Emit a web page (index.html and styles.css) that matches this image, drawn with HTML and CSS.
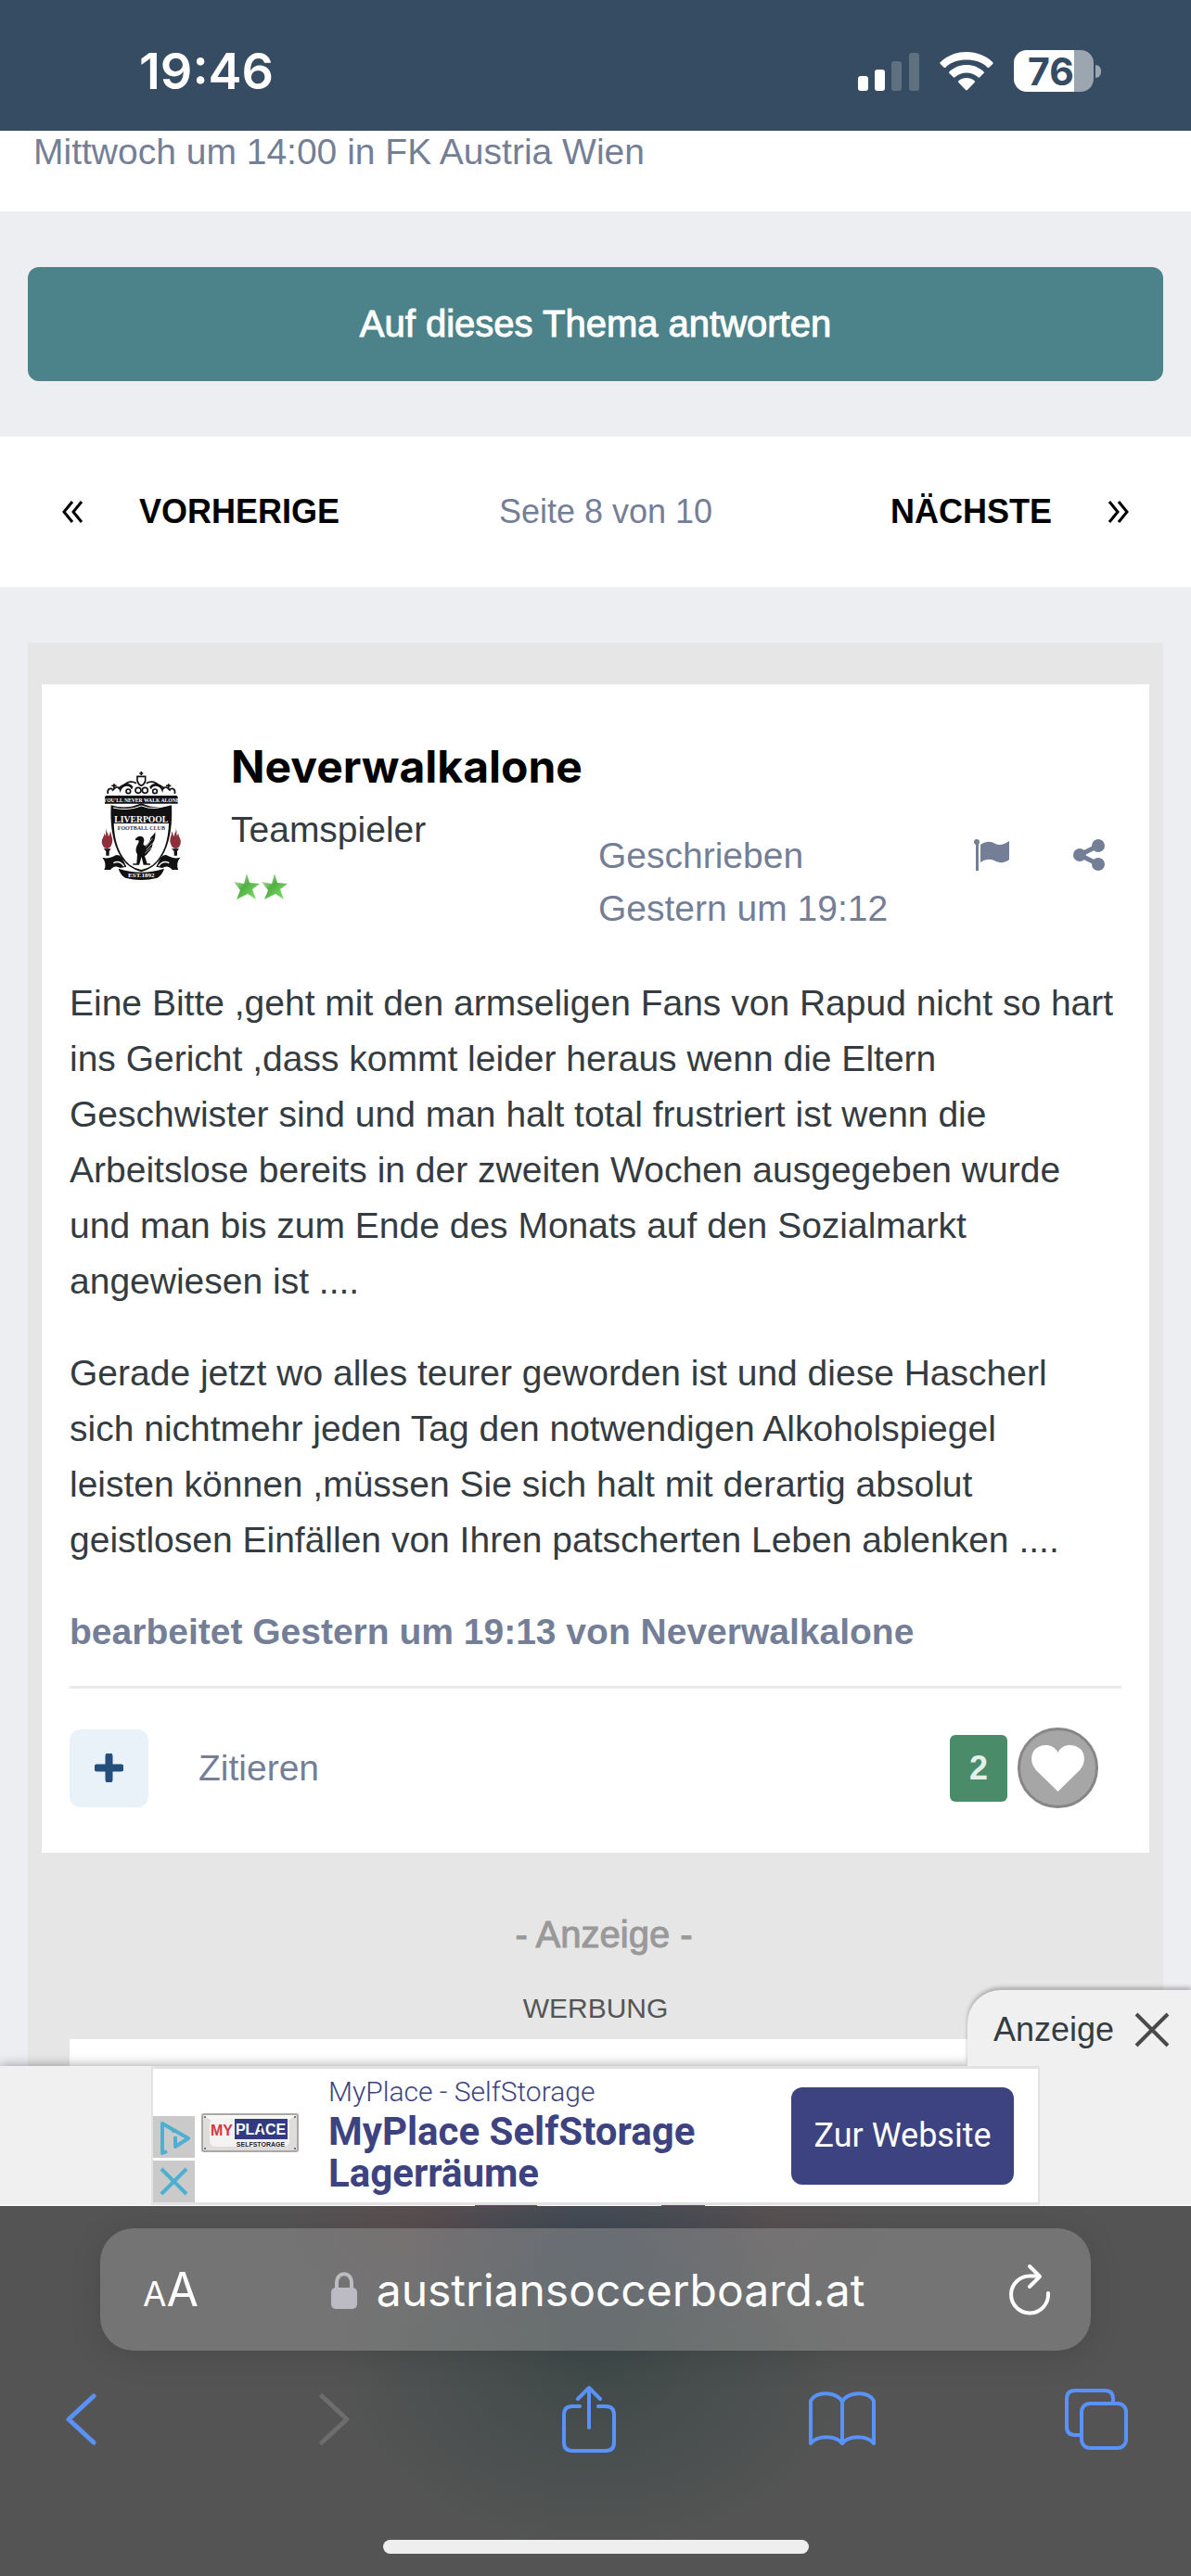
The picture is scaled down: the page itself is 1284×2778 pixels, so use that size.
FILE: index.html
```html
<!DOCTYPE html>
<html lang="de">

<head>
    <meta charset="UTF-8">
    <meta name="viewport" content="width=device-width, initial-scale=1.0">
    <title>Austrian Soccer Board</title>
    <link rel="stylesheet" href="styles.css">
</head>

<body>
    <header class="status">
        <time class="status-time">19:46</time>
        <div class="status-icons">
            <svg class="signal" width="66" height="44" viewBox="0 0 66 44">
                <rect x="0" y="27" width="11" height="16" rx="3" fill="#fff"/>
                <rect x="18" y="20" width="11" height="23" rx="3" fill="#fff"/>
                <rect x="36" y="11" width="11" height="32" rx="3" fill="#5f7081"/>
                <rect x="55" y="2" width="11" height="41" rx="3" fill="#5f7081"/>
            </svg>
            <svg class="wifi" width="58" height="44" viewBox="0 0 58 44">
                <path d="M29 1C18 1 8 5 .8 12c-.6.6-.6 1.300 0 1.900l3.800 3.800c.5.500 1.300.5 1.800 0C12.500 11.800 20.500 9.600 29 9.600s16.500 2.200 22.600 8.100c.5.500 1.300.5 1.800 0l3.800-3.800c.6-.6.6-1.300 0-1.900C50 5 40 1 29 1z" fill="#fff"/>
                <path d="M29 15c-7 0-13.500 2.600-18.500 7.200-.6.5-.6 1.300 0 1.900l4.300 4.200c.5.5 1.200.5 1.700 0 3.500-3.100 7.800-4.800 12.500-4.800s9 1.700 12.500 4.800c.5.5 1.200.5 1.700 0l4.300-4.200c.6-.6.6-1.400 0-1.900C42.500 17.600 36 15 29 15z" fill="#fff"/>
                <path d="M29 29c-3.200 0-6.200 1.100-8.500 3.100-.6.500-.6 1.300-.1 1.800l7.700 8.100c.5.600 1.300.6 1.800 0l7.700-8.100c.5-.5.5-1.300-.1-1.800C35.200 30.100 32.200 29 29 29z" fill="#fff"/>
            </svg>
            <div class="battery">
                <span class="battery-level">76</span>
                <span class="battery-cap"></span>
            </div>
        </div>
    </header>

    <main class="content">
        <div class="topic-info">Mittwoch um 14:00 in FK Austria Wien</div>

        <button type="button" class="reply">Auf dieses Thema antworten</button>

        <nav class="pager">
            <a href="#" class="pager-link">
                <svg width="23" height="24" viewBox="0 0 23 24"><path d="M11 1L2 12l9 11M21 1l-9 11 9 11" fill="none" stroke="#000" stroke-width="3"/></svg>
                VORHERIGE
            </a>
            <span class="pager-count">Seite 8 von 10</span>
            <a href="#" class="pager-link">
                NÄCHSTE
                <svg width="23" height="24" viewBox="0 0 23 24"><path d="M12 1l9 11-9 11M2 1l9 11-9 11" fill="none" stroke="#000" stroke-width="3"/></svg>
            </a>
        </nav>

        <div class="feed">
            <article class="post">
                <div class="post-head">
                    <svg class="avatar" width="120" height="120" viewBox="40 90 360 360">
                        <g fill="none" stroke="#111" stroke-width="5">
                            <path d="M205 112h26v14q-3 12-13 16-10-4-13-16zM218 96v12M212 102h12"/>
                            <path d="M110 168c-4-16 10-22 16-12 10-14 22-10 24 0 8-20 32-20 38-4M326 168c4-16-10-22-16-12-10-14-22-10-24 0-8-20-32-20-38-4"/>
                            <path d="M144 152c10-14 34-22 46-4M292 152c-10-14-34-22-46-4M130 136v18M306 136v18M122 142h16M298 142h16"/>
                            <path d="M156 146q22-26 46-12M280 146q-22-26-46-12"/>
                            <circle cx="208" cy="157" r="9"/>
                            <circle cx="230" cy="157" r="9"/>
                            <circle cx="176" cy="160" r="7"/>
                            <circle cx="262" cy="160" r="7"/>
                        </g>
                        <path d="M104 174h228l4 4v22H100v-22z" fill="#111"/>
                        <text class="crest-text" x="218" y="194" font-size="17" fill="#fff">YOU'LL NEVER WALK ALONE</text>
                        <path d="M120 205q50 16 98-6 48 22 98 6c4 80-10 160-60 198q-20 14-38 18-18-4-38-18c-50-38-64-118-60-198z" fill="#111"/>
                        <path d="M129 264q89-6 178 0c-2 56-16 104-52 134q-18 13-37 16-19-3-37-16c-36-30-50-78-52-134z" fill="#fff"/>
                        <path d="M127 213q46 12 91-6 45 18 91-6" fill="none" stroke="#fff" stroke-width="3"/>
                        <path d="M130 236h176v28H130z" fill="#111"/>
                        <text class="crest-text" x="218" y="260" font-size="29" fill="#fff">LIVERPOOL</text>
                        <text class="crest-text" x="218" y="284" font-size="18" fill="#333">FOOTBALL CLUB</text>
                        <path d="M198 316q8-14 22-10 10 6 6 18-4 10 4 12 16-8 18-26 10-8 15-18 2 22-8 36-2 20-14 30-6 8-12 12l8 24h10v4h-22l-6-26-8 26h-20v-4h12l2-30q-10-14 2-34 6-10 0-12-6 2-9-2z" fill="#111"/>
                        <path d="M232 340l22-28M234 350l20-22M230 360l20-18" stroke="#fff" stroke-width="2"/>
                        <path d="M108 278c-8 14 8 18 2 28 8-4 4-12 10-16-2 14 10 22 2 42-6 18-26 16-30 0-6-18 6-22 6-36 4 4 4 8 4 10 4-10-2-18 6-28z" fill="#8f2f3b"/>
                        <path d="M328 278c8 14-8 18-2 28-8-4-4-12-10-16 2 14-10 22-2 42 6 18 26 16 30 0 6-18-6-22-6-36-4 4-4 8-4 10-4-10 2-18-6-28z" fill="#8f2f3b"/>
                        <path d="M96 346h24l-6 8v14h-10v-14zM316 346h24l-6 8v14h-10v-14z" fill="#111"/>
                        <path d="M92 374q20 6 38-4 14-10 26 6l14 28-20 4q-18-12-32 6l-20 0q10-20-6-40zM344 374q-20 6-38-4-14-10-26 6l-14 28 20 4q18-12 32 6l20 0q-10-20 6-40z" fill="#111"/>
                        <path d="M128 392q20-10 34 10M308 392q-20-10-34 10" fill="none" stroke="#fff" stroke-width="4"/>
                        <path d="M144 410q74 24 148 0-6 20-22 30-52 14-104 0-16-10-22-30z" fill="#111"/>
                        <text class="crest-text" x="218" y="438" font-size="21" fill="#fff">EST.1892</text>
                    </svg>
                    <div class="author">
                        <h3 class="author-name">Neverwalkalone</h3>
                        <div class="author-rank">Teamspieler</div>
                        <svg class="stars" width="58" height="28" viewBox="0 0 58 28">
                            <defs>
                                <linearGradient id="starFill" x1="0" y1="0" x2="1" y2="1">
                                    <stop offset="0" stop-color="#dcfad4"/>
                                    <stop offset=".45" stop-color="#4fb040"/>
                                    <stop offset="1" stop-color="#8be87b"/>
                                </linearGradient>
                            </defs>
                            <path d="M14 0l3 10 11 1-8 6 4 11-9-6-12 6 4-10L0 9l11 2z" fill="url(#starFill)"/>
                            <path d="M44 0l3 10 11 1-8 6 4 11-9-6-12 6 4-10L30 9l11 2z" fill="url(#starFill)"/>
                        </svg>
                    </div>
                    <a href="#" class="post-date">Geschrieben<br>Gestern um 19:12</a>
                    <div class="post-tools">
                        <button type="button" class="icon-btn" aria-label="Melden">
                            <svg width="39" height="34" viewBox="0 0 39 34"><circle cx="3" cy="3" r="3" fill="#747f97"/><path d="M2 3h3v31H2zM7 6c6-4 11-4 16-1 5 2 9 1 15-3v20c-5 4-11 4-16 1-5-2-9-2-15 2z" fill="#747f97"/></svg>
                        </button>
                        <button type="button" class="icon-btn" aria-label="Teilen">
                            <svg width="34" height="34" viewBox="0 0 34 34"><path d="M27 7L7 17l20 10" fill="none" stroke="#747f97" stroke-width="5"/><circle cx="27" cy="7" r="7" fill="#747f97"/><circle cx="7" cy="17" r="7" fill="#747f97"/><circle cx="27" cy="27" r="7" fill="#747f97"/></svg>
                        </button>
                    </div>
                </div>

                <div class="post-body">
                    <p>Eine Bitte ,geht mit den armseligen Fans von Rapud nicht so hart ins Gericht ,dass kommt leider heraus wenn die Eltern Geschwister sind und man halt total frustriert ist wenn die Arbeitslose bereits in der zweiten Wochen ausgegeben wurde und man bis zum Ende des Monats auf den Sozialmarkt angewiesen ist ....</p>
                    <p>Gerade jetzt wo alles teurer geworden ist und diese Hascherl<br>
                        sich nichtmehr jeden Tag den notwendigen Alkoholspiegel<br>
                        leisten können ,müssen Sie sich halt mit derartig absolut<br>
                        geistlosen Einfällen von Ihren patscherten Leben ablenken ....</p>
                    <p class="edited">bearbeitet Gestern um 19:13 von Neverwalkalone</p>
                </div>

                <div class="post-actions">
                    <button type="button" class="multiquote" aria-label="Multi-Zitat">
                        <svg width="31" height="31" viewBox="0 0 31 31"><path d="M15.500 3v25M3 15.500h25" stroke="#244e7b" stroke-width="8" stroke-linecap="round"/></svg>
                    </button>
                    <a href="#" class="quote">Zitieren</a>
                    <span class="likes">2</span>
                    <button type="button" class="like" aria-label="Gefällt mir">
                        <svg width="57" height="50" viewBox="0 0 57 50"><path d="M28.500 50L5 27C-2 19-1 8 5 3.500 13-2 24-1 28.500 8 33-1 44-2 52 3.500 58 8 59 19 52 27z" fill="#fff"/></svg>
                    </button>
                </div>
            </article>

            <div class="ad-label">- Anzeige -</div>
            <div class="ad-caption">WERBUNG</div>
            <div class="ad-slot"></div>
        </div>
    </main>

    <aside class="banner">
        <div class="banner-tab">
            <span>Anzeige</span>
            <button type="button" class="icon-btn" aria-label="Schließen">
                <svg width="38" height="38" viewBox="0 0 38 38"><path d="M2 2l34 34M36 2L2 36" stroke="#4a4a4a" stroke-width="4"/></svg>
            </button>
        </div>
        <div class="banner-ad">
            <div class="adchoices">
                <svg width="45" height="45" viewBox="0 0 45 45"><path d="M15 38l-5 2V8l28 16-14 9V22" fill="none" stroke="#4fafd0" stroke-width="4" stroke-linejoin="round"/><circle cx="22" cy="16" r="2" fill="#4fafd0"/></svg>
                <svg width="45" height="45" viewBox="0 0 45 45"><path d="M9 9l27 27M36 9L9 36" stroke="#4fafd0" stroke-width="4"/></svg>
            </div>
            <svg class="myplace" width="105" height="42" viewBox="0 0 105 42">
                <rect x="1" y="1" width="103" height="40" rx="2" fill="#dedddb" stroke="#a9a8a6" stroke-width="2"/>
                <path d="M2 2h101L93 8H11z" fill="#f7f7f7"/>
                <rect x="9" y="6" width="86" height="30" rx="6" fill="#f3f3f2"/>
                <circle cx="4" cy="4" r="1" fill="#555"/>
                <circle cx="101" cy="4" r="1" fill="#555"/>
                <circle cx="4" cy="38" r="1" fill="#555"/>
                <circle cx="101" cy="38" r="1" fill="#555"/>
                <rect x="36" y="6" width="57" height="22" fill="#333a80"/>
                <text class="logo-text" x="22" y="24" font-size="16" fill="#d13a41">MY</text>
                <text class="logo-text" x="64" y="23" font-size="16" fill="#fff">PLACE</text>
                <circle cx="64" cy="15" r="1.500" fill="#111"/>
                <path d="M63.500 15h1v5h-1z" fill="#111"/>
                <text class="logo-text" x="64" y="36" font-size="7" fill="#222">SELFSTORAGE</text>
            </svg>
            <div class="banner-text">
                <div class="banner-brand">MyPlace - SelfStorage</div>
                <div class="banner-title">MyPlace SelfStorage Lagerräume</div>
            </div>
            <a href="#" class="banner-cta">Zur Website</a>
        </div>
        <div class="banner-edge"></div>
    </aside>

    <footer class="browser">
        <div class="address">
            <button type="button" class="text-size" aria-label="Textgröße"><small>A</small>A</button>
            <div class="domain">
                <svg width="28" height="40" viewBox="0 0 28 40"><rect x="0" y="17" width="28" height="23" rx="5" fill="#bcbac3"/><path d="M6 19v-7c0-13 16-13 16 0v7" fill="none" stroke="#bcbac3" stroke-width="4"/></svg>
                <span>austriansoccerboard.at</span>
            </div>
            <button type="button" class="icon-btn" aria-label="Neu laden">
                <svg width="46" height="56" viewBox="0 0 46 56"><path d="M33 13.500H24A20 20 0 1 0 43 32" fill="none" stroke="#fff" stroke-width="4" stroke-linecap="round"/><path d="M23 3l11 11-11 11" fill="none" stroke="#fff" stroke-width="4" stroke-linecap="round" stroke-linejoin="round"/></svg>
            </button>
        </div>
        <nav class="toolbar">
            <button type="button" class="icon-btn" aria-label="Zurück">
                <svg width="34" height="56" viewBox="0 0 34 56"><path d="M31 3L4 28l27 25" fill="none" stroke="#5a92fb" stroke-width="5" stroke-linecap="round" stroke-linejoin="round"/></svg>
            </button>
            <button type="button" class="icon-btn" aria-label="Vorwärts">
                <svg width="34" height="56" viewBox="0 0 34 56"><path d="M3 3l27 25L3 53" fill="none" stroke="#6d6d6d" stroke-width="5" stroke-linecap="round" stroke-linejoin="round"/></svg>
            </button>
            <button type="button" class="icon-btn" aria-label="Teilen">
                <svg width="58" height="72" viewBox="0 0 58 72"><path d="M19 22h-8q-9 0-9 9v30q0 9 9 9h36q9 0 9-9V31q0-9-9-9h-8M29 45V3M17 14L29 2l12 12" fill="none" stroke="#5a92fb" stroke-width="4" stroke-linecap="round" stroke-linejoin="round"/></svg>
            </button>
            <button type="button" class="icon-btn" aria-label="Lesezeichen">
                <svg width="72" height="60" viewBox="0 0 72 60"><path d="M36 11C30 0 8-1 2 10v46c7-9 27-9 34 0 7-9 27-9 34 0V10C64-1 42 0 36 11zM36 11v45" fill="none" stroke="#5a92fb" stroke-width="4" stroke-linejoin="round"/></svg>
            </button>
            <button type="button" class="icon-btn" aria-label="Tabs">
                <svg width="68" height="66" viewBox="0 0 68 66"><rect x="18" y="16" width="48" height="48" rx="9" fill="none" stroke="#5a92fb" stroke-width="4"/><path d="M17 50h-6q-9 0-9-9V11q0-9 9-9h32q9 0 9 9v4" fill="none" stroke="#5a92fb" stroke-width="4"/></svg>
            </button>
        </nav>
        <div class="home-bar"></div>
    </footer>
</body>

</html>
```
FILE: styles.css
```css
* {
    box-sizing: border-box;
}

body {
    display: flex;
    flex-direction: column;
    height: 100vh;
    margin: 0;
    overflow: hidden;
    background-color: #edeef2;
    color: #353c41;
    font-family: "Liberation Sans", Arial, sans-serif;
    font-size: 39px;
    line-height: 60px;
}

svg {
    display: block;
    flex: none;
}

a {
    color: inherit;
    text-decoration: none;
}

button {
    font-family: inherit;
    border: none;
    padding: 0;
    cursor: pointer;
}

.icon-btn {
    background: none;
}

/* Statusleiste */
.status {
    display: flex;
    flex: none;
    justify-content: space-between;
    align-items: center;
    height: 141px;
    padding: 12px 97px 0 150px;
    background-color: #364c63;
    color: #fff;
    font-family: Inter, sans-serif;
    font-weight: 600;
}

.status-time {
    font-size: 54px;
}

.status-icons {
    display: flex;
    align-items: center;
    gap: 22px;
}

.battery {
    display: flex;
    align-items: center;
    gap: 2px;
}

.battery-level {
    width: 86px;
    height: 45px;
    padding-left: 15px;
    border-radius: 14px;
    background: linear-gradient(to right, #fff 76%, #9ba6b1 76%);
    color: #364c63;
    font-size: 41px;
    font-weight: 700;
    line-height: 46px;
}

.battery-cap {
    width: 6px;
    height: 14px;
    border-radius: 0 6px 6px 0;
    background-color: #9ba6b1;
}

/* Inhalt */
.content {
    flex: 1;
    min-height: 0;
    overflow: hidden;
}

.topic-info {
    height: 87px;
    padding: 0 36px;
    line-height: 45px;
    background-color: #fff;
    color: #747f97;
}

.reply {
    display: block;
    width: calc(100% - 60px);
    height: 123px;
    margin: 60px 30px;
    border-radius: 12px;
    background-color: #4c8289;
    color: #fff;
    font-size: 40px;
    -webkit-text-stroke: 1px #fff;
}

.pager {
    display: flex;
    justify-content: space-between;
    align-items: center;
    height: 162px;
    padding: 0 67px;
    background-color: #fff;
    font-size: 36px;
}

.pager-link {
    display: flex;
    align-items: center;
    gap: 60px;
    color: #000;
    font-weight: bold;
}

.pager-count {
    padding-right: 20px;
    color: #747f97;
}

.feed {
    margin: 60px 30px 0;
    padding: 45px 15px 0;
    background-color: #e6e6e6;
}

.post {
    padding: 57px 30px 48px;
    background-color: #fff;
}

.post-head {
    display: flex;
    padding: 0 18px;
    margin-bottom: 44px;
}

.avatar {
    margin-top: 35px;
}

.author {
    width: 396px;
    margin-left: 36px;
}

.author-name {
    margin: 0;
    color: #000;
    font-family: Inter, sans-serif;
    font-size: 48px;
    font-weight: 700;
    line-height: 63px;
}

.author-rank {
    line-height: 74px;
}

.stars {
    margin: 10px 0 0 3px;
}

.post-date {
    margin-top: 99px;
    color: #747f97;
    line-height: 57px;
}

.post-tools {
    display: flex;
    align-items: flex-start;
    gap: 68px;
    margin: 110px 0 0 auto;
}

.post-body p {
    margin: 0 0 39px;
}

.post-body .edited {
    margin-bottom: 28px;
    color: #747f97;
    font-weight: bold;
}

.post-actions {
    display: flex;
    align-items: center;
    padding: 42px 25px 0 0;
    border-top: 3px solid #ebebeb;
}

.multiquote {
    display: flex;
    justify-content: center;
    align-items: center;
    width: 85px;
    height: 84px;
    border-radius: 12px;
    background-color: #e9f1f9;
}

.quote {
    margin-left: 54px;
    color: #747f97;
}

.likes {
    width: 62px;
    height: 72px;
    margin-left: auto;
    margin-right: 11px;
    border-radius: 6px;
    background-color: #4a8b6a;
    color: #e3f0e8;
    font-size: 36px;
    font-weight: bold;
    line-height: 72px;
    text-align: center;
}

.like {
    display: flex;
    justify-content: center;
    align-items: center;
    width: 87px;
    height: 87px;
    border: 3px solid #868686;
    border-radius: 50%;
    background-color: #a6a6a6;
}

.ad-label {
    margin-top: 58px;
    padding-left: 18px;
    color: #999;
    font-size: 40px;
    text-align: center;
    -webkit-text-stroke: 1px #999;
}

.ad-caption {
    padding-top: 32px;
    color: #555;
    font-size: 30px;
    line-height: 36px;
    text-align: center;
}

.ad-slot {
    height: 750px;
    margin: 15px 30px 0;
    background-color: #fff;
}

/* Werbebanner unten */
.banner {
    position: relative;
    flex: none;
    background-color: #f0f0f0;
    box-shadow: 0 0 12px rgba(0, 0, 0, 0.4);
}

.banner-tab {
    position: absolute;
    right: 0;
    bottom: 100%;
    display: flex;
    align-items: center;
    gap: 22px;
    height: 82px;
    padding: 4px 23px 0 28px;
    border-top-left-radius: 36px;
    background-color: #f0f0f0;
    box-shadow: 0 -3px 4px rgba(0, 0, 0, 0.25);
    font-size: 36px;
    clip-path: inset(-8px 0 0 -8px);
}

.banner-ad {
    display: flex;
    align-items: flex-end;
    width: 958px;
    height: 150px;
    margin: 0 auto;
    border: solid #e2e2e2;
    border-width: 3px 2px;
    background-color: #fff;
    color: #3d4380;
    font-family: Roboto, sans-serif;
}

.adchoices {
    display: grid;
    gap: 3px;
}

.adchoices svg {
    background-color: #cacaca;
}

.myplace {
    margin: 0 32px 54px 7px;
}

.banner-text {
    width: 440px;
    align-self: flex-start;
    padding-top: 5px;
}

.banner-brand {
    font-size: 30px;
    font-weight: 300;
    line-height: 40px;
}

.banner-title {
    font-size: 42px;
    font-weight: 700;
    line-height: 45px;
}

.banner-cta {
    align-self: center;
    width: 240px;
    margin: 0 26px 0 auto;
    border-radius: 12px;
    background-color: #3d4380;
    color: #fff;
    font-size: 36px;
    line-height: 105px;
    text-align: center;
}

.banner-edge {
    height: 1px;
    background: linear-gradient(to right, #fff 512px, #c52b2b 512px, #c52b2b 579px, #fff 579px, #fff 713px, #c52b2b 713px, #c52b2b 760px, #fff 760px);
}

/* Browserleiste */
.browser {
    flex: none;
    position: relative;
    height: 399px;
    padding-top: 24px;
    background:
        radial-gradient(ellipse 200px 140px at 50% 10%, rgba(54, 66, 86, 0.6), transparent),
        radial-gradient(ellipse 280px 200px at 50% 43%, rgba(54, 70, 68, 0.7), transparent),
        radial-gradient(ellipse 160px 130px at 36% 0, rgba(95, 70, 74, 0.5), transparent),
        radial-gradient(ellipse 160px 130px at 63% 0, rgba(95, 70, 74, 0.3), transparent),
        #545454;
    color: #fff;
    font-family: Inter, sans-serif;
}

.address {
    display: flex;
    justify-content: space-between;
    align-items: center;
    height: 132px;
    margin: 0 108px;
    padding: 0 43px 0 46px;
    border-radius: 36px;
    background-color: rgba(156, 156, 156, 0.45);
    box-shadow: 0 6px 36px rgba(0, 0, 0, 0.12);
}

.text-size {
    background: none;
    color: #fff;
    font-size: 50px;
}

.text-size small {
    font-size: 37px;
}

.domain {
    display: flex;
    align-items: center;
    gap: 21px;
    padding: 2px 12px 0 0;
    font-size: 48px;
}

.toolbar {
    display: flex;
    justify-content: space-between;
    align-items: center;
    height: 72px;
    margin-top: 38px;
    padding: 0 65px 0 50px;
}

.toolbar .icon-btn {
    display: flex;
    justify-content: center;
    width: 74px;
}

.home-bar {
    width: 459px;
    height: 15px;
    margin: 94px auto 0;
    border-radius: 8px;
    background-color: #eee;
}

.crest-text {
    font-family: "Liberation Serif", serif;
    font-weight: bold;
    text-anchor: middle;
}

.logo-text {
    font-family: "Liberation Sans", sans-serif;
    font-weight: bold;
    text-anchor: middle;
}
```
